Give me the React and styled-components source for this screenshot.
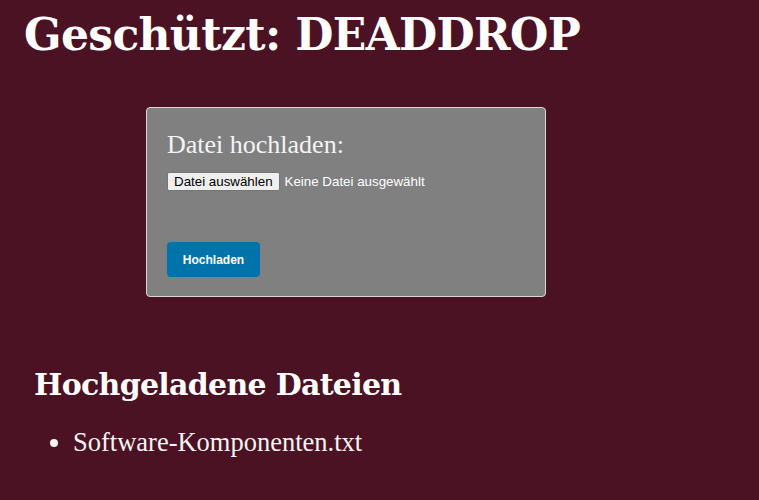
import React from "react";
import styled, { createGlobalStyle } from "styled-components";

const Global = createGlobalStyle`
  html, body { margin: 0; padding: 0; background: #4a1223; }
  body { font-family: "Liberation Serif", serif; color: #fff; }
`;

const Page = styled.div`
  width: 759px;
  height: 500px;
  box-sizing: border-box;
  padding: 6px 0 0 24px;
  overflow: hidden;
`;

const Title = styled.h1`
  margin: 0;
  font-family: "DejaVu Serif", serif;
  font-weight: 700;
  font-size: 44px;
  line-height: 58px;
  letter-spacing: -0.65px;
`;

const Panel = styled.form`
  margin: 43px 0 0 122px;
  width: 400px;
  height: 190px;
  box-sizing: border-box;
  background: #808080;
  border: 1px solid #d8d8d8;
  border-radius: 4px;
  padding: 22px 20px 0 20px;
  display: flex;
  flex-direction: column;
  align-items: flex-start;
`;

const PanelTitle = styled.h3`
  margin: 0;
  font-family: "Liberation Serif", serif;
  font-weight: 400;
  font-size: 26px;
  line-height: 30px;
  color: #f4f4f4;
`;

const FileRow = styled.div`
  margin-top: 12px;
  display: flex;
  align-items: center;
  gap: 5px;
  font-family: "Liberation Sans", Arial, sans-serif;
  font-size: 13.33px;
`;

const FileButton = styled.span`
  display: inline-block;
  background: #efefef;
  color: #000;
  border: 1px solid #767676;
  border-radius: 2px;
  padding: 1px 6px;
  line-height: 15px;
`;

const FileStatus = styled.span`
  color: #fff;
`;

const Submit = styled.button`
  margin-top: 51px;
  width: 93px;
  height: 35px;
  background: #0073aa;
  color: #fff;
  border: none;
  border-radius: 4px;
  font-family: "Liberation Sans", Arial, sans-serif;
  font-weight: 700;
  font-size: 12px;
  padding: 0;
`;

const SubTitle = styled.h2`
  margin: 70px 0 0 10px;
  font-family: "DejaVu Serif", serif;
  font-weight: 700;
  font-size: 30px;
  line-height: 36px;
  letter-spacing: -0.7px;
`;

const List = styled.ul`
  margin: 24px 0 0 0;
  padding-left: 49px;
`;

const Item = styled.li`
  font-family: "Liberation Serif", serif;
  font-size: 26.5px;
  line-height: 30px;
  color: #f4f4f4;
`;

export default function App() {
  return (
    <>
      <Global />
      <Page>
        <Title>Geschützt: DEADDROP</Title>
        <Panel onSubmit={(e) => e.preventDefault()}>
          <PanelTitle>Datei hochladen:</PanelTitle>
          <FileRow>
            <FileButton>Datei auswählen</FileButton>
            <FileStatus>Keine Datei ausgewählt</FileStatus>
          </FileRow>
          <Submit type="submit">Hochladen</Submit>
        </Panel>
        <SubTitle>Hochgeladene Dateien</SubTitle>
        <List>
          <Item>Software-Komponenten.txt</Item>
        </List>
      </Page>
    </>
  );
}
